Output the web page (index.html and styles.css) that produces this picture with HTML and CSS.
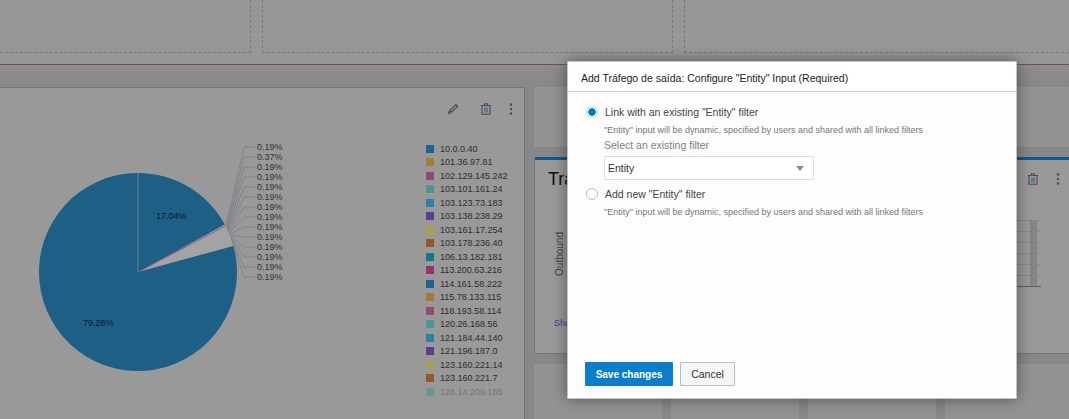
FILE: index.html
```html
<!DOCTYPE html>
<html lang="en">
<head>
    <meta charset="UTF-8">
    <title>Dashboard</title>
    <link rel="stylesheet" href="styles.css">
</head>
<body>
    <!-- Drop zones -->
    <div class="zones">
        <div class="zone zone-first"></div>
        <div class="zone zone-mid"></div>
        <div class="zone zone-last"></div>
    </div>

    <div class="dashboard">
        <!-- Pie widget -->
        <section class="card pie-card">
            <div class="card-tools">
                <svg class="icon" viewBox="0 0 12 12"><path d="M1.5 10.5 L2.3 8 L9 1.5 L10.7 3.2 L4 9.7 Z M3 7.5 L4.6 9.2" fill="none" stroke="#4c4c4c" stroke-width="1.1"/></svg>
                <svg class="icon icon-trash" viewBox="0 0 12 12"><path d="M1 2.5 H11 M4.5 2.5 V0.8 H7.5 V2.5 M2 2.5 V11.3 H10 V2.5" fill="none" stroke="#4c4c4c" stroke-width="1.1"/><rect x="4" y="4.5" width="4" height="5" fill="#5c7c94"/></svg>
                <svg class="dots" viewBox="0 0 4 12"><circle cx="2" cy="1.5" r="1.2"/><circle cx="2" cy="6" r="1.2"/><circle cx="2" cy="10.5" r="1.2"/></svg>
            </div>
            <div class="pie-body">
                <svg class="pie" viewBox="0 130 420 270">
                    <path d="M138 272 L233.5 245.9 A99 99 0 0 0 224.8 224.5 Z" fill="#a3a3a3"/>
                    <path d="M138 272 L138 173 A99 99 0 0 1 224.8 224.5 Z" fill="#1d5f85"/>
                    <path d="M138 272 L233.5 245.9 A99 99 0 1 1 138 173 Z" fill="#1d5f85"/>
                    <path d="M138 272 V173" stroke="#5b7f97" stroke-width="1.3"/>
                    <path d="M138 272 L225.3 226" stroke="#95407a" stroke-width="0.8"/>
                    <path class="leaders" d="M226 226 L244 147 H255 M226.5 227 L244 157 H255 M227 228 L244 167 H255 M227.4 229 L244 177 H255 M227.8 230 L244 187 H255 M228.2 231 L244 197 H255 M228.6 232 L244 207 H255 M229 233 L244 217 H255 M229.4 234 L244 227 H255 M229.8 235 L244 237 H255 M230.2 236 L244 247 H255 M230.6 237 L244 257 H255 M231 238 L244 267 H255 M231.4 239 L244 277 H255"/>
                    <text class="slice-label" x="156" y="219">17.04%</text>
                    <text class="slice-label" x="83" y="326">79.26%</text>
                    <text x="257" y="150">0.19%</text>
                    <text x="257" y="160">0.37%</text>
                    <text x="257" y="170">0.19%</text>
                    <text x="257" y="180">0.19%</text>
                    <text x="257" y="190">0.19%</text>
                    <text x="257" y="200">0.19%</text>
                    <text x="257" y="210">0.19%</text>
                    <text x="257" y="220">0.19%</text>
                    <text x="257" y="230">0.19%</text>
                    <text x="257" y="240">0.19%</text>
                    <text x="257" y="250">0.19%</text>
                    <text x="257" y="260">0.19%</text>
                    <text x="257" y="270">0.19%</text>
                    <text x="257" y="280">0.19%</text>
                </svg>
                <ul class="legend">
                    <li><i class="c1"></i>10.0.0.40</li>
                    <li><i class="c2"></i>101.36.97.81</li>
                    <li><i class="c3"></i>102.129.145.242</li>
                    <li><i class="c4"></i>103.101.161.24</li>
                    <li><i class="c5"></i>103.123.73.183</li>
                    <li><i class="c6"></i>103.138.238.29</li>
                    <li><i class="c7"></i>103.161.17.254</li>
                    <li><i class="c8"></i>103.178.236.40</li>
                    <li><i class="c9"></i>106.13.182.181</li>
                    <li><i class="c10"></i>113.200.63.216</li>
                    <li><i class="c1"></i>114.161.58.222</li>
                    <li><i class="c2"></i>115.78.133.115</li>
                    <li><i class="c3"></i>118.193.58.114</li>
                    <li><i class="c4"></i>120.26.168.56</li>
                    <li><i class="c5"></i>121.184.44.140</li>
                    <li><i class="c6"></i>121.196.187.0</li>
                    <li><i class="c7"></i>123.160.221.14</li>
                    <li><i class="c8"></i>123.160.221.7</li>
                    <li class="faded"><i class="c4"></i>128.14.209.165</li>
                </ul>
            </div>
        </section>

        <!-- Right column -->
        <div class="side">
            <div class="tile tile-top"></div>
            <section class="card traffic-card">
                <div class="traffic-head">
                    <h2>Tráfego</h2>
                    <svg class="icon icon-trash" viewBox="0 0 12 12"><path d="M1 2.5 H11 M4.5 2.5 V0.8 H7.5 V2.5 M2 2.5 V11.3 H10 V2.5" fill="none" stroke="#4c4c4c" stroke-width="1.1"/><rect x="4" y="4.5" width="4" height="5" fill="#5c7c94"/></svg>
                    <svg class="dots" viewBox="0 0 4 12"><circle cx="2" cy="1.5" r="1.2"/><circle cx="2" cy="6" r="1.2"/><circle cx="2" cy="10.5" r="1.2"/></svg>
                </div>
                <div class="plot">
                    <span class="y-label">Outbound</span>
                    <div class="chart"><div class="bar"></div></div>
                </div>
                <a class="show-link">Show</a>
            </section>
            <div class="tile-row">
                <div class="tile"></div>
                <div class="tile"></div>
                <div class="tile"></div>
                <div class="tile"></div>
            </div>
        </div>
    </div>

    <!-- Configure dialog -->
    <div class="modal">
        <div class="modal-title">Add Tráfego de saída: Configure "Entity" Input (Required)</div>
        <div class="modal-body">
            <div class="radio-row"><span class="radio radio-on"></span>Link with an existing "Entity" filter</div>
            <p class="hint">"Entity" input will be dynamic, specified by users and shared with all linked filters</p>
            <p class="select-label">Select an existing filter</p>
            <div class="select">Entity<span class="caret"></span></div>
            <div class="radio-row radio-row-new"><span class="radio"></span>Add new "Entity" filter</div>
            <p class="hint">"Entity" input will be dynamic, specified by users and shared with all linked filters</p>
        </div>
        <div class="modal-foot">
            <button class="btn btn-save">Save changes</button>
            <button class="btn btn-cancel">Cancel</button>
        </div>
    </div>
</body>
</html>
```
FILE: styles.css
```css
html, body {
    margin: 0;
    height: 419px;
    overflow: hidden;
}

body {
    position: relative;
    font-family: "Liberation Sans", Arial, sans-serif;
    background: #8d8d8d;
}

/* Drop zones */
.zones {
    display: flex;
    gap: 11px;
    height: 65px;
    box-sizing: border-box;
    padding-bottom: 11px;
    background: #979797;
    border-bottom: 1px solid #7a4b57;
}

.zone {
    border: 1px dashed #7b7b7b;
    border-top: none;
}

.zone-first {
    width: 251px;
    border-left: none;
    box-sizing: border-box;
}

.zone-mid {
    width: 411px;
    box-sizing: border-box;
}

.zone-last {
    flex: 1;
    border-right: none;
}

/* Dashboard */
.dashboard {
    display: flex;
    gap: 9px;
    padding-top: 22px;
    background: linear-gradient(#8d8d8d, #888888 22px);
}

.card {
    box-sizing: border-box;
    background: #999999;
    border: 1px solid #767676;
}

.pie-card {
    width: 525px;
    flex: none;
    height: 340px;
    border-left: none;
    border-bottom: none;
}

.card-tools {
    display: flex;
    align-items: center;
    justify-content: flex-end;
    height: 42px;
    padding-right: 11px;
}

.icon {
    width: 12px;
    height: 12px;
}

.card-tools .icon-trash {
    margin-left: 21px;
}

.dots {
    width: 4px;
    height: 12px;
    margin-left: 17px;
    fill: #4c4c4c;
}

.pie-body {
    display: flex;
    align-items: flex-start;
}

.pie {
    width: 420px;
    height: 270px;
    flex: none;
}

.pie text {
    font-size: 9px;
    fill: #333333;
}

.pie .slice-label {
    fill: #0c1a24;
}

.leaders {
    fill: none;
    stroke: #80858c;
    stroke-width: 1;
}

.legend {
    list-style: none;
    margin: 12px 0 0 6px;
    padding: 0;
    font-size: 9px;
    color: #2e2e2e;
}

.legend li {
    display: flex;
    align-items: center;
    height: 13.5px;
}

.legend i {
    width: 8px;
    height: 8px;
    margin-right: 6px;
}

.legend .faded {
    color: #777777;
}

.legend .faded i {
    opacity: 0.7;
}

.c1 { background: #1d648f; }
.c2 { background: #a87a35; }
.c3 { background: #8f4a78; }
.c4 { background: #4c9690; }
.c5 { background: #2f7fa8; }
.c6 { background: #5a3f8a; }
.c7 { background: #a8a050; }
.c8 { background: #9c5528; }
.c9 { background: #0f7a8a; }
.c10 { background: #963560; }

/* Right column */
.side {
    display: flex;
    flex-direction: column;
    flex: 1;
    min-width: 0;
    gap: 10px;
}

.tile {
    background: #939393;
}

.tile-top {
    height: 60px;
}

.traffic-card {
    height: 197px;
    border-top: 3px solid #0e5a94;
    border-right: none;
    border-radius: 2px 0 0 2px;
    padding-left: 13px;
}

.traffic-head {
    display: flex;
    align-items: center;
    height: 38px;
    padding-right: 9px;
}

.traffic-head h2 {
    flex: 1;
    margin: 0;
    font-size: 18px;
    font-weight: normal;
    color: #111111;
}

.plot {
    display: flex;
    align-items: center;
    margin-top: 22px;
    padding-right: 28px;
}

.y-label {
    margin-left: 6px;
    font-size: 10px;
    color: #444444;
    writing-mode: vertical-rl;
    transform: rotate(180deg);
}

.chart {
    position: relative;
    flex: 1;
    height: 67px;
    margin-left: 8px;
    box-sizing: border-box;
    border-bottom: 1px solid #5f5f5f;
    background: repeating-linear-gradient(#8a8a8a 0 1px, transparent 1px 11px);
}

.bar {
    position: absolute;
    top: 0;
    bottom: 0;
    right: 4px;
    width: 7px;
    background: #858585;
}

.show-link {
    display: block;
    margin: 30px 0 0 6px;
    font-size: 9px;
    line-height: 12px;
    color: #1f4a80;
}

.tile-row {
    display: flex;
    gap: 9px;
}

.tile-row .tile {
    flex: none;
    width: 128px;
    height: 60px;
}

/* Dialog */
.modal {
    position: absolute;
    left: 567px;
    top: 61px;
    width: 450px;
    height: 338px;
    box-sizing: border-box;
    display: flex;
    flex-direction: column;
    background: #fdfdfd;
    border: 1px solid #c4c4c4;
    box-shadow: 0 0 14px rgba(0, 0, 0, 0.45);
}

.modal-title {
    height: 30px;
    box-sizing: border-box;
    padding: 9px 0 0 13px;
    font-size: 10.5px;
    line-height: 14px;
    color: #222222;
    background: #ffffff;
    border-bottom: 1px solid #cfcfcf;
}

.modal-body {
    padding: 12px 0 0 18px;
    color: #444444;
}

.radio-row {
    display: flex;
    align-items: center;
    height: 16px;
    font-size: 10.5px;
}

.radio-row-new {
    margin-top: 6px;
}

.radio {
    width: 12px;
    height: 12px;
    margin-right: 7px;
    box-sizing: border-box;
    background: #ffffff;
    border: 1px solid #bdbdbd;
    border-radius: 50%;
}

.radio-on {
    border-color: #c0d0e0;
    background: radial-gradient(circle, #0878c8 0 3.5px, #ffffff 4px);
}

.hint {
    margin: 4px 0 0 18px;
    font-size: 9px;
    line-height: 12px;
    color: #777777;
}

.select-label {
    margin: 2px 0 0 18px;
    font-size: 10.5px;
    line-height: 14px;
    color: #808080;
}

.select {
    position: relative;
    width: 210px;
    height: 24px;
    box-sizing: border-box;
    margin: 4px 0 0 18px;
    padding-left: 3px;
    font-size: 10.5px;
    line-height: 22px;
    color: #333333;
    background: #ffffff;
    border: 1px solid #dfdfdf;
}

.caret {
    position: absolute;
    right: 9px;
    top: 9px;
    border-top: 5px solid #8a8a8a;
    border-left: 4px solid transparent;
    border-right: 4px solid transparent;
}

.modal-foot {
    display: flex;
    gap: 7px;
    margin-top: auto;
    padding: 0 0 12px 17px;
}

.btn {
    height: 24px;
    padding: 0;
    font-family: inherit;
    font-size: 10.5px;
    border-radius: 1px;
    box-sizing: border-box;
}

.btn-save {
    width: 88px;
    font-size: 10px;
    font-weight: bold;
    color: #ffffff;
    background: #0a7ecb;
    border: none;
}

.btn-cancel {
    width: 55px;
    color: #333333;
    background: #f5f5f5;
    border: 1px solid #b9bdc4;
}
```
